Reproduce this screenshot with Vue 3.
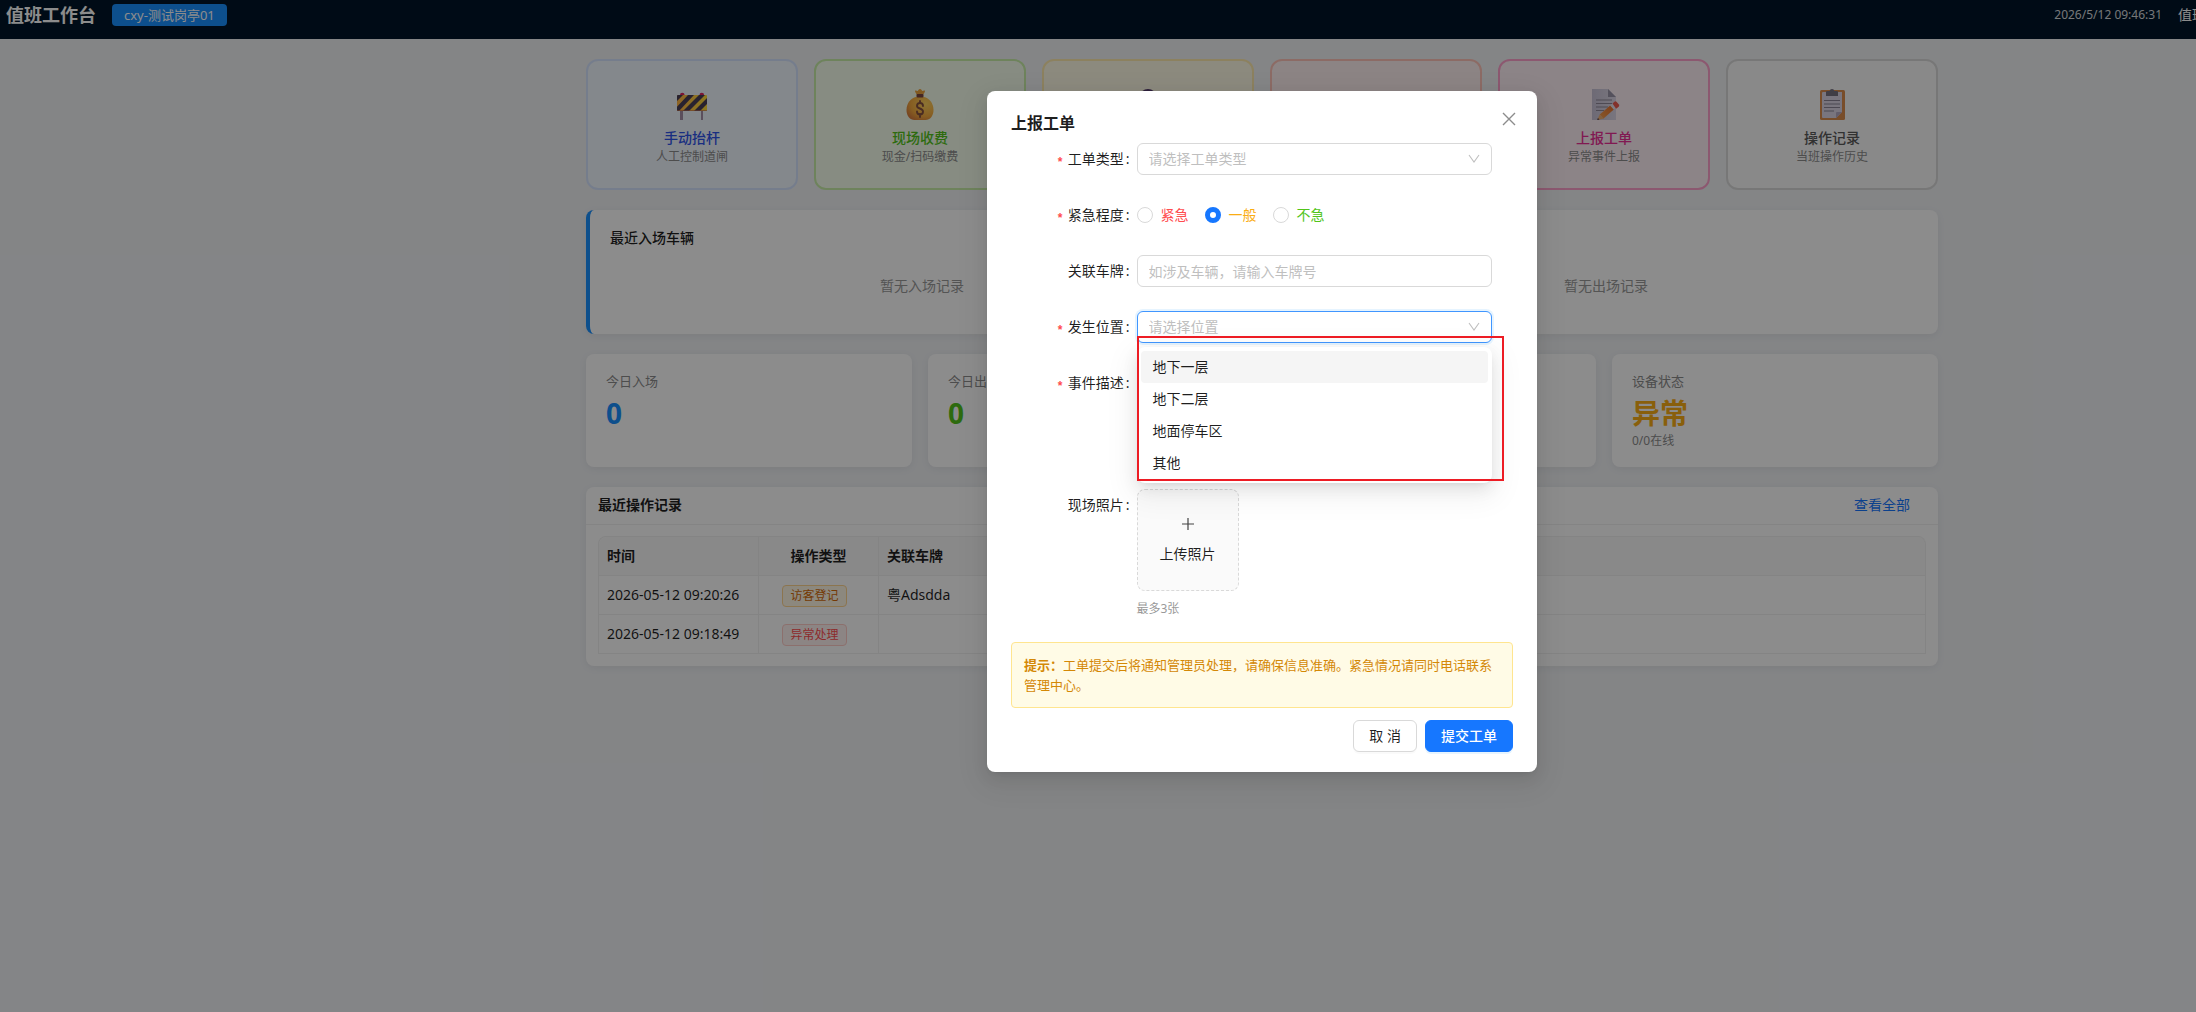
<script setup>
import { ref } from 'vue'

const actions = [
  { key: 'gate', title: '手动抬杆', desc: '人工控制道闸' },
  { key: 'cash', title: '现场收费', desc: '现金/扫码缴费' },
  { key: 'visitor', title: '访客登记', desc: '临时访客登记' },
  { key: 'alarm', title: '异常处理', desc: '异常放行处理' },
  { key: 'ticket', title: '上报工单', desc: '异常事件上报' },
  { key: 'log', title: '操作记录', desc: '当班操作历史' },
]

const recents = [
  { title: '最近入场车辆', empty: '暂无入场记录', tone: 'in' },
  { title: '最近出场车辆', empty: '暂无出场记录', tone: 'out' },
]

const stats = [
  { label: '今日入场', value: '0', tone: 'blue' },
  { label: '今日出场', value: '0', tone: 'green' },
  { label: '今日收费', value: '0', tone: 'blue' },
  { label: '设备状态', value: '异常', tone: 'orange', note: '0/0在线' },
]

const records = [
  { time: '2026-05-12 09:20:26', type: '访客登记', tone: 'warn', plate: '粤Adsdda' },
  { time: '2026-05-12 09:18:49', type: '异常处理', tone: 'error', plate: '' },
]

const levels = [
  { value: 'high', label: '紧急' },
  { value: 'normal', label: '一般' },
  { value: 'low', label: '不急' },
]

const places = ['地下一层', '地下二层', '地面停车区', '其他']

const orderType = ref('')
const level = ref('normal')
const plate = ref('')
const place = ref('')
const detail = ref('')
const active = ref(0)
</script>

<template>
  <div class="viewport">
    <div class="stage">
      <header class="topbar">
        <h1 class="brand">值班工作台</h1>
        <span class="booth">cxy-测试岗亭01</span>
        <time class="clock">2026/5/12 09:46:31</time>
        <span class="user">值班员</span>
      </header>

      <main class="content">
        <section class="actions">
          <button v-for="a in actions" :key="a.key" type="button" class="action" :class="a.key">
            <svg v-if="a.key === 'gate'" class="emoji" viewBox="0 0 32 32">
              <defs>
                <linearGradient id="board" x1="0" x2="1"><stop offset="0" stop-color="#ffb547" /><stop offset="1" stop-color="#ffdc3c" /></linearGradient>
                <clipPath id="boardClip"><rect x="1" y="7" width="30" height="16" rx="1" /></clipPath>
              </defs>
              <rect x="4" y="21" width="3" height="11" fill="#a790a8" /><rect x="25" y="21" width="2" height="11" fill="#a790a8" />
              <path d="M4 7a2.3 2.3 0 0 1 4.600 0zM23.500 7a2.300 2.300 0 0 1 4.600 0z" fill="#e0245e" />
              <rect x="1" y="7" width="30" height="16" rx="1" fill="url(#board)" />
              <g clip-path="url(#boardClip)" fill="#4a3f56">
                <path d="M1 7h6l-6 6zM12 7h6L3 23H-3zM23 7h6L13 23H7zM33 8v6l-9 9h-6z" />
              </g>
              <path d="M1 22h30v1H1z" fill="#c06a50" opacity=".6" />
            </svg>
            <svg v-else-if="a.key === 'cash'" class="emoji" viewBox="0 0 32 32">
              <defs>
                <radialGradient id="sack" cx=".7" cy=".3" r=".9"><stop offset="0" stop-color="#ffd35e" /><stop offset=".6" stop-color="#f5ab3e" /><stop offset="1" stop-color="#cf6e3c" /></radialGradient>
              </defs>
              <path d="M13 7c-1-2-2-3-2-4s2 0 3 0c0-1 1-2 2-2s2 1 2 2c1 0 3-1 3 0s-1 2-2 4z" fill="#eca23c" />
              <path d="M12 9C7 10 2.500 15 2.500 22c0 6 3.500 10 8 10h11c4.500 0 8-4 8-10 0-7-4.500-12-9.500-13z" fill="url(#sack)" />
              <rect x="12.500" y="6" width="7" height="3.500" rx="1" fill="#7c4640" />
              <path d="M19 18c0-2-1.500-3-3-3s-3 1-3 3c0 3 6 2 6 5.500 0 2-1.500 3-3 3s-3-1-3-3M16 13v2M16 26v3" fill="none" stroke="#86503e" stroke-width="1.900" stroke-linecap="round" />
            </svg>
            <svg v-else-if="a.key === 'visitor'" class="emoji" viewBox="0 0 32 32">
              <ellipse cx="16" cy="8" rx="8" ry="7" fill="#533a6c" /><circle cx="16" cy="12" r="6" fill="#f2b58a" /><path d="M4 32c0-8 5-12 12-12s12 4 12 12z" fill="#4a72d8" />
            </svg>
            <svg v-else-if="a.key === 'alarm'" class="emoji" viewBox="0 0 32 32">
              <path d="M16 4l14 26H2z" fill="#ffc83d" /><path d="M15 13h2v9h-2zM15 24h2v2h-2z" fill="#4a3f56" />
            </svg>
            <svg v-else-if="a.key === 'ticket'" class="emoji" viewBox="0 0 32 32">
              <defs>
                <linearGradient id="pencil" x1="0" y1="1" x2="1" y2="0"><stop offset="0" stop-color="#f5a050" /><stop offset="1" stop-color="#e8702c" /></linearGradient>
                <linearGradient id="sheet" x1="0" x2="1"><stop offset="0" stop-color="#c8c2d6" /><stop offset="1" stop-color="#dcd6e6" /></linearGradient>
              </defs>
              <path d="M4 1h16l8 8v23H4z" fill="url(#sheet)" />
              <path d="M20 1l8 8h-8z" fill="#9a94a8" />
              <path d="M8 12h16M8 15.500h16M8 19h12M8 22.500h8" stroke="#8e8898" stroke-width="1.200" />
              <path d="M11.700 26.500L22.200 17.400 25.800 21.600 15.300 30.700z" fill="url(#pencil)" />
              <path d="M11.700 26.500l3.600 4.200L9.200 32z" fill="#f0b070" />
              <path d="M9.900 30l1.600 1.600-2.300.4z" fill="#4b3b4b" />
              <path d="M22.200 17.400l2.300-2 3.600 4.200-2.300 2z" fill="#e8e4ee" />
              <path d="M24.500 15.400l2-1.700q1.200-.8 2.200.3l2.200 2.600q.8 1.100-.2 2.100l-2.600 2z" fill="#ee5a4f" />
            </svg>
            <svg v-else class="emoji" viewBox="0 0 32 32">
              <rect x="4" y="2" width="25" height="30" rx="1.500" fill="#da8d4e" />
              <path d="M7 4h19v20l-6 6H7q-1 0-1-1V5q0-1 1-1z" fill="#dcd6e6" />
              <path d="M26 24l-6 6v-5q0-1 1-1z" fill="#b5a9c4" />
              <path d="M8 12.500h16M8 16h16M8 19.500h16M8 23h10" stroke="#8a8496" stroke-width="1.200" />
              <path d="M10 4q0-1 1-1h2.500q.5-2 2.500-2t2.500 2H21q1 0 1 1v4H10z" fill="#777180" />
            </svg>
            <span class="action-title">{{ a.title }}</span>
            <span class="action-desc">{{ a.desc }}</span>
          </button>
        </section>

        <section class="recents">
          <article v-for="r in recents" :key="r.title" class="card recent" :class="r.tone">
            <h2 class="recent-title">{{ r.title }}</h2>
            <p class="recent-empty">{{ r.empty }}</p>
          </article>
        </section>

        <section class="stats">
          <article v-for="s in stats" :key="s.label" class="card stat">
            <div class="stat-label">{{ s.label }}</div>
            <div class="stat-value" :class="s.tone">{{ s.value }}</div>
            <div class="stat-note">{{ s.note }}</div>
          </article>
        </section>

        <section class="card records">
          <div class="records-head">
            <h2>最近操作记录</h2>
            <a href="#">查看全部</a>
          </div>
          <div class="records-body">
            <table>
              <colgroup><col class="c-time" /><col class="c-type" /><col /></colgroup>
              <thead>
                <tr><th>时间</th><th class="mid">操作类型</th><th>关联车牌</th></tr>
              </thead>
              <tbody>
                <tr v-for="r in records" :key="r.time">
                  <td>{{ r.time }}</td>
                  <td class="mid"><span class="tag" :class="r.tone">{{ r.type }}</span></td>
                  <td>{{ r.plate }}</td>
                </tr>
              </tbody>
            </table>
          </div>
        </section>
      </main>

      <div class="mask">
        <div class="modal" role="dialog" aria-modal="true" aria-labelledby="dlg-title">
          <button type="button" class="close" aria-label="关闭">
            <svg viewBox="0 0 14 14"><path d="M1 1l12 12M13 1L1 13" /></svg>
          </button>
          <h2 id="dlg-title" class="modal-title">上报工单</h2>

          <form @submit.prevent>
            <div class="row">
              <label class="name required" for="f-type">工单类型</label>
              <div class="field">
                <select id="f-type" v-model="orderType" class="control" :class="{ blank: !orderType }">
                  <option value="">请选择工单类型</option>
                  <option value="device">设备故障</option>
                </select>
                <svg class="arrow" viewBox="0 0 12 12"><path d="M1 2l5 7 5-7" /></svg>
              </div>
            </div>

            <div class="row">
              <span id="f-level" class="name required">紧急程度</span>
              <div class="field radios" role="radiogroup" aria-labelledby="f-level">
                <label v-for="l in levels" :key="l.value" class="radio">
                  <input v-model="level" type="radio" name="level" :value="l.value" />
                  <span :class="l.value">{{ l.label }}</span>
                </label>
              </div>
            </div>

            <div class="row">
              <label class="name" for="f-plate">关联车牌</label>
              <div class="field">
                <input id="f-plate" v-model="plate" class="control" type="text" placeholder="如涉及车辆，请输入车牌号" />
              </div>
            </div>

            <div class="row">
              <label class="name required" for="f-place">发生位置</label>
              <div class="field">
                <select id="f-place" v-model="place" class="control open" :class="{ blank: !place }">
                  <option value="">请选择位置</option>
                  <option v-for="p in places" :key="p" :value="p">{{ p }}</option>
                </select>
                <svg class="arrow" viewBox="0 0 12 12"><path d="M1 2l5 7 5-7" /></svg>
                <ul class="dropdown" role="listbox" aria-label="发生位置">
                  <li
                    v-for="(p, i) in places"
                    :key="p"
                    role="option"
                    :class="{ active: i === active }"
                    @mouseenter="active = i"
                    @click="place = p"
                  >{{ p }}</li>
                </ul>
                <div class="callout"></div>
              </div>
            </div>

            <div class="row">
              <label class="name required" for="f-detail">事件描述</label>
              <div class="field">
                <textarea id="f-detail" v-model="detail" class="control area"></textarea>
              </div>
            </div>

            <div class="row">
              <span class="name">现场照片</span>
              <div class="field">
                <button type="button" class="upload">
                  <svg viewBox="0 0 14 14"><path d="M7 1v12M1 7h12" /></svg>
                  <span>上传照片</span>
                </button>
                <p class="hint">最多3张</p>
              </div>
            </div>

            <p class="notice"><strong>提示：</strong>工单提交后将通知管理员处理，请确保信息准确。紧急情况请同时电话联系管理中心。</p>

            <div class="footer">
              <button type="button" class="btn">取 消</button>
              <button type="submit" class="btn primary">提交工单</button>
            </div>
          </form>
        </div>
      </div>
    </div>
  </div>
</template>

<style>
body {
  margin: 0;
  background: #848587;
}
</style>

<style scoped>
.viewport {
  --off: 328px;
  overflow: hidden;
  font-family: "Noto Sans", "Noto Sans CJK SC", sans-serif;
  font-size: 14px;
  line-height: 22px;
  color: rgba(0, 0, 0, 0.88);
}
.viewport *, .viewport *::before, .viewport *::after { box-sizing: border-box; }
.stage {
  position: relative;
  width: calc(100% + var(--off));
  min-height: 100vh;
  background: #f0f2f5;
}
h1, h2, p, ul { margin: 0; padding: 0; }
button, input, select, textarea { font: inherit; color: inherit; margin: 0; }

.topbar {
  display: flex;
  align-items: center;
  padding: 4px 0 13px 6px;
  background: #001529;
  color: #fff;
  white-space: nowrap;
}
.brand { font-size: 18px; line-height: 22px; font-weight: 600; }
.booth {
  margin-left: 16px;
  padding: 0 12px;
  border-radius: 4px;
  background: #1890ff;
  font-size: 13px;
}
.clock { margin-left: auto; margin-right: 16px; font-size: 12px; color: rgba(255, 255, 255, 0.85); }
.user { width: 346px; }

.content {
  max-width: 1352px;
  margin: 0 auto;
  padding: 20px 0;
  display: flex;
  flex-direction: column;
  gap: 20px;
}
.actions { display: grid; grid-template-columns: repeat(6, 1fr); gap: 16px; }
.action {
  display: flex;
  flex-direction: column;
  align-items: center;
  padding: 27px 16px 22px;
  border: 2px solid;
  border-radius: 12px;
}
.emoji { width: 32px; height: 32px; margin-bottom: 8px; }
.action-title { line-height: 20px; font-weight: 500; }
.action-desc { font-size: 12px; line-height: 18px; color: #8c8c8c; }
.gate { background: #f0f7ff; border-color: #d6e4ff; }
.gate .action-title { color: #2f54eb; }
.cash { background: #f6ffed; border-color: #c8efa8; }
.cash .action-title { color: #52c41a; }
.visitor { background: #fffbe6; border-color: #ffebae; }
.visitor .action-title { color: #faad14; }
.alarm { background: #fff1f0; border-color: #ffc4b8; }
.alarm .action-title { color: #f5222d; }
.ticket { background: #fff0f6; border-color: #ffa0cc; }
.ticket .action-title { color: #eb2f96; }
.log { background: #fafafa; border-color: #d9d9d9; }
.log .action-title { color: #595959; }

.card { background: #fff; border-radius: 8px; box-shadow: 0 2px 8px rgba(0, 0, 0, 0.06); }
.recents { display: grid; grid-template-columns: 1fr 1fr; gap: 16px; }
.recent { padding: 16px 20px; border-left: 4px solid #1890ff; }
.recent.out { border-left-color: #52c41a; }
.recent-title { font-size: 14px; line-height: 24px; font-weight: 500; }
.recent-empty { padding: 24px 0 20px; line-height: 24px; text-align: center; color: #999; }

.stats { display: grid; grid-template-columns: repeat(4, 1fr); gap: 16px; }
.stat { padding: 15px 20px 18px; }
.stat-label { font-size: 13px; line-height: 24px; color: #8c8c8c; }
.stat-value { font-size: 28px; line-height: 40px; font-weight: 700; }
.stat-note { font-size: 12px; line-height: 16px; color: #8c8c8c; }
.blue { color: #1890ff; }
.green { color: #52c41a; }
.orange { color: #faad14; }

.records-head {
  display: flex;
  justify-content: space-between;
  align-items: center;
  padding: 7px 28px 8px 12px;
  border-bottom: 1px solid #f0f0f0;
}
.records-head h2 { font-size: 14px; line-height: 22px; font-weight: 600; }
.records-head a { color: #1677ff; text-decoration: none; }
.records-body { padding: 11px 12px 12px; }
table {
  width: 100%;
  table-layout: fixed;
  border-collapse: separate;
  border-spacing: 0;
  border: 1px solid #f0f0f0;
  border-width: 1px 0 0 1px;
  border-radius: 8px 8px 0 0;
}
.c-time { width: 160px; }
.c-type { width: 120px; }
th, td {
  height: 39px;
  padding: 0 8px;
  text-align: left;
  border: 1px solid #f0f0f0;
  border-width: 0 1px 1px 0;
  white-space: nowrap;
}
th { background: #fafafa; font-weight: 600; }
th:first-child { border-top-left-radius: 8px; }
th:last-child { border-top-right-radius: 8px; }
.mid { text-align: center; }
.tag {
  display: inline-block;
  margin-right: 8px;
  padding: 0 7px;
  border: 1px solid;
  border-radius: 4px;
  font-size: 12px;
  line-height: 20px;
  vertical-align: middle;
}
.tag.warn { background: #fff7e6; border-color: #ffd591; color: #d46b08; }
.tag.error { background: #fff2f0; border-color: #ffccc7; color: #ff4d4f; }

.mask {
  position: absolute;
  inset: 0;
  padding-top: 91px;
  background: rgba(0, 0, 0, 0.45);
}
.modal {
  position: relative;
  width: 550px;
  margin: 0 auto;
  padding: 20px 24px;
  background: #fff;
  border-radius: 8px;
  box-shadow: 0 6px 16px rgba(0, 0, 0, 0.08), 0 3px 6px -4px rgba(0, 0, 0, 0.12), 0 9px 28px 8px rgba(0, 0, 0, 0.05);
}
.modal-title { margin-bottom: 8px; font-size: 16px; line-height: 24px; font-weight: 600; }
.close {
  position: absolute;
  top: 17px;
  right: 17px;
  width: 22px;
  height: 22px;
  padding: 0;
  border: 0;
  background: none;
  display: grid;
  place-items: center;
}
.close svg { width: 14px; height: 14px; stroke: #8c8c8c; stroke-width: 1.4; }
.row { display: grid; grid-template-columns: 6fr 17fr 1fr; margin-bottom: 24px; }
.name {
  height: 32px;
  padding-right: 7px;
  line-height: 32px;
  text-align: right;
  white-space: nowrap;
}
.name::after { content: ":"; margin-left: 2px; }
.required::before {
  content: "*";
  display: inline-block;
  margin-right: 4px;
  color: #ff4d4f;
  font: 700 12px/12px "Liberation Mono", monospace;
  vertical-align: -2px;
}
.field { position: relative; min-width: 0; }
.control {
  display: block;
  width: 100%;
  height: 32px;
  padding: 0 11px;
  border: 1px solid #d9d9d9;
  border-radius: 6px;
  background: #fff;
  appearance: none;
  outline: none;
}
.control::placeholder { color: #bfbfbf; opacity: 1; }
.control.blank { color: #bfbfbf; }
.control.open { border-color: #4096ff; box-shadow: 0 0 0 2px rgba(5, 145, 255, 0.1); }
.area { height: 98px; resize: none; }
.arrow {
  position: absolute;
  top: 10px;
  right: 12px;
  width: 12px;
  height: 12px;
  fill: none;
  stroke: #bfbfbf;
  stroke-width: 1.1;
  pointer-events: none;
}
.radios { display: flex; gap: 8px; height: 32px; align-items: center; }
.radio { display: flex; align-items: center; padding-right: 8px; gap: 8px; }
.radio input {
  width: 16px;
  height: 16px;
  border: 1px solid #d9d9d9;
  border-radius: 50%;
  background: #fff;
  appearance: none;
}
.radio input:checked { border: 5px solid #1677ff; }
.high { color: #ff4d4f; }
.normal { color: #faad14; }
.low { color: #52c41a; }

.dropdown {
  position: absolute;
  z-index: 2;
  top: 36px;
  left: 0;
  width: 100%;
  padding: 4px;
  list-style: none;
  background: #fff;
  border-radius: 8px;
  box-shadow: 0 6px 16px rgba(0, 0, 0, 0.08), 0 3px 6px -4px rgba(0, 0, 0, 0.12), 0 9px 28px 8px rgba(0, 0, 0, 0.05);
}
.dropdown li { padding: 5px 12px; border-radius: 4px; }
.dropdown li.active { background: #f5f5f5; }
.callout {
  position: absolute;
  z-index: 3;
  top: 25px;
  left: 0;
  right: -12px;
  height: 145px;
  border: 2px solid #ed1c24;
  pointer-events: none;
}
.upload {
  width: 102px;
  height: 102px;
  padding: 2px 0 0;
  display: flex;
  flex-direction: column;
  align-items: center;
  justify-content: center;
  gap: 12px;
  border: 1px dashed #d9d9d9;
  border-radius: 8px;
  background: #fafafa;
}
.upload svg { width: 14px; height: 14px; stroke: #434343; stroke-width: 1.2; }
.hint { margin-top: 9px; font-size: 12px; line-height: 18px; color: #999; }
.notice {
  padding: 12px;
  border: 1px solid #ffe58f;
  border-radius: 4px;
  background: #fffbe6;
  color: #d48806;
  font-size: 13px;
  line-height: 20px;
}
.notice strong { font-weight: 700; }
.footer { display: flex; justify-content: flex-end; gap: 8px; margin-top: 12px; }
.btn {
  height: 32px;
  padding: 0 15px;
  border: 1px solid #d9d9d9;
  border-radius: 6px;
  background: #fff;
  box-shadow: 0 2px 0 rgba(0, 0, 0, 0.02);
}
.btn.primary {
  border-color: #1677ff;
  background: #1677ff;
  color: #fff;
  font-weight: 500;
  box-shadow: 0 2px 0 rgba(5, 145, 255, 0.1);
}
</style>
